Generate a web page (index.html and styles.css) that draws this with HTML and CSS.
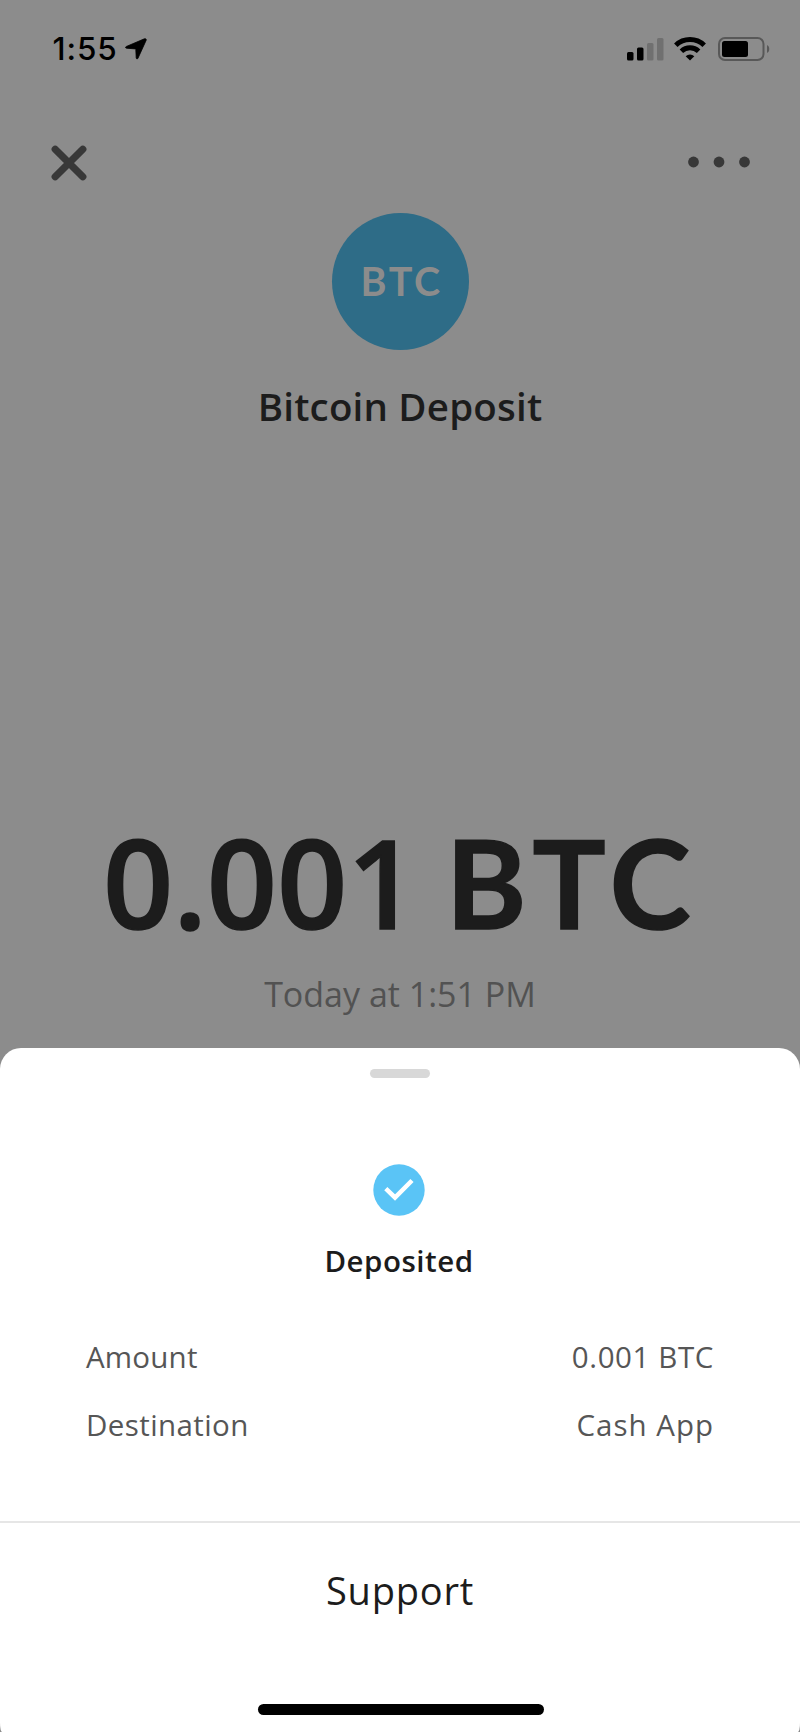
FILE: index.html
```html
<!DOCTYPE html>
<html lang="en">
<head>
<meta charset="utf-8">
<title>Bitcoin Deposit</title>
<link rel="stylesheet" href="styles.css">
</head>
<body>
<div class="screen">
  <main class="payment">
    <header class="status">
      <div class="status-left">
        <span class="time">1:55</span>
        <svg class="location" width="22" height="22" viewBox="0 0 22 22"><path d="M19.400.8 1.300 8.500C.2 9 .4 10.100 1.500 10.200L10.300 10.900c.3 0 .5.100.5.400l.4 8.600c.1 1.200 1.300 1.400 1.800.3L21.200 2.200c.4-1-.6-1.800-1.800-1.400z"/></svg>
      </div>
      <div class="status-right">
        <svg width="37" height="24" viewBox="0 0 37 24">
          <rect x="0" y="15" width="6.500" height="8.500" rx="1.500"/>
          <rect x="10" y="10.500" width="6.500" height="13" rx="1.500"/>
          <rect class="dim" x="20" y="6" width="6.500" height="17.500" rx="1.500"/>
          <rect class="dim" x="30" y="1" width="6.500" height="22.500" rx="1.500"/>
        </svg>
        <svg class="wifi" width="32" height="24" viewBox="0 0 32 24">
          <path class="arc" d="M1.800 8.300a20.500 20.500 0 0 1 28.400 0"/>
          <path class="arc" d="M7.400 14.200a12.400 12.400 0 0 1 17.200 0"/>
          <path d="M16 23.500 11.700 19.200a6 6 0 0 1 8.600 0z"/>
        </svg>
        <svg class="battery" width="52" height="24" viewBox="0 0 52 24">
          <rect class="shell" x="1" y="1" width="44.500" height="22" rx="6"/>
          <rect x="4" y="4" width="26" height="16" rx="2.500"/>
          <path class="tip" d="M49 8c3 1.300 3 6.700 0 8z"/>
        </svg>
      </div>
    </header>
    <nav class="nav">
      <svg class="close" width="36" height="36" viewBox="0 0 36 36"><path d="M4.200 4.200l27.600 27.600M31.800 4.200 4.200 31.800"/></svg>
      <svg class="more" width="62" height="12" viewBox="0 0 62 12"><circle cx="5.500" cy="6" r="5.400"/><circle cx="31" cy="6" r="5.400"/><circle cx="56.500" cy="6" r="5.400"/></svg>
    </nav>
    <div class="avatar">BTC</div>
    <h1 class="title">Bitcoin Deposit</h1>
    <p class="amount"><span class="number">0.001 </span><span class="unit">BTC</span></p>
    <p class="date">Today at 1:51 PM</p>
  </main>
  <section class="sheet">
    <div class="handle"></div>
    <svg class="check" width="52" height="52" viewBox="0 0 52 52"><circle cx="26" cy="26" r="25.700"/><path d="M12.800 24.700 22 33.500 39 16.500"/></svg>
    <h2 class="state">Deposited</h2>
    <dl class="details">
      <div class="row"><dt class="label">Amount</dt><dd class="value value-amount">0.001 BTC</dd></div>
      <div class="row"><dt class="label label-wide">Destination</dt><dd class="value">Cash App</dd></div>
    </dl>
    <div class="support">Support</div>
    <div class="home"></div>
  </section>
</div>
</body>
</html>
```
FILE: styles.css
```css
* { box-sizing: border-box; margin: 0; padding: 0; }
html { background: #8c8c8c; }
body { font-family: "Open Sans", "Noto Sans", sans-serif; color: #1c1c1c; }
svg { display: block; flex: none; }
.screen { display: flex; flex-direction: column; width: 800px; height: 1732px; overflow: hidden; }
.payment { display: flex; flex-direction: column; align-items: center; height: 1048px; }
.status { display: flex; justify-content: space-between; width: 100%; height: 98px; padding: 27px 30.500px 27px 52.500px; fill: #000; }
.status-left, .status-right { display: flex; align-items: center; height: 44px; }
.time { font: 500 31.500px/44px Inter, sans-serif; letter-spacing: 0.900px; color: #000; }
.location { margin: 0 0 1px 7.500px; stroke: #000; stroke-width: 0.800; }
.dim { fill: #707070; }
.wifi { margin-left: 10.500px; }
.arc { fill: none; stroke: #000; stroke-width: 5; }
.battery { margin-left: 11.500px; }
.shell { fill: none; stroke: #585858; stroke-width: 2; }
.tip { fill: #585858; }
.nav { display: flex; justify-content: space-between; align-items: flex-start; width: 100%; height: 115px; padding: 46.500px 50.500px 0 50.500px; }
.close { fill: none; stroke: #383838; stroke-width: 7.200; stroke-linecap: round; }
.more { margin-top: 11px; fill: #383838; }
.avatar { width: 137px; height: 137px; margin-left: 1px; padding-left: 2px; border-radius: 50%; background: #2e6c87; color: #8c8c8c; font-family: Lato, "Open Sans", sans-serif; font-size: 39.500px; font-weight: 700; line-height: 136px; letter-spacing: 2.500px; text-align: center; }
.title { margin-top: 30.500px; font-size: 38.500px; font-weight: 600; line-height: 50px; letter-spacing: 0.200px; }
.amount { display: flex; align-items: baseline; width: 100%; height: 130px; margin-top: 386.500px; padding-left: 103px; font-size: 123px; font-weight: 600; line-height: 130px; white-space: nowrap; -webkit-text-stroke: 1.500px #1c1c1c; }
.number { width: 343px; letter-spacing: -0.100px; }
.unit { font-family: Lato, "Open Sans", sans-serif; font-size: 122px; font-weight: 700; letter-spacing: 7px; }
.date { margin-top: 25px; font-size: 34px; line-height: 44px; color: #525252; }
.sheet { display: flex; flex-direction: column; align-items: center; height: 684px; border-radius: 21px 21px 2px 2px / 21px 21px 9px 9px; background: #fff; }
.handle { width: 60px; height: 9px; margin-top: 21px; border-radius: 4.500px; background: #d8d8d8; }
.check { margin: 86px 2px 0 0; fill: #5ac4f6; }
.check path { fill: none; stroke: #fff; stroke-width: 4.500; }
.state { margin: 24.500px 2px 0 0; font-size: 29.500px; font-weight: 600; line-height: 40px; letter-spacing: 0.500px; }
.details { display: grid; gap: 28px; width: 100%; padding: 56px 87px 76.500px 86px; border-bottom: 2px solid #e6e6e6; color: #565656; font-size: 29.500px; line-height: 40px; }
.row { display: flex; justify-content: space-between; }
.label { letter-spacing: 0.200px; }
.label-wide { letter-spacing: 0.400px; }
.value { margin-right: -1px; letter-spacing: 1px; }
.value-amount { letter-spacing: 0.600px; }
.support { margin-top: 41.500px; font-size: 38px; line-height: 50px; letter-spacing: 0.800px; }
.home { width: 286px; height: 11px; margin: 89px 0 0 1px; border-radius: 5.500px; background: #000; }
```
